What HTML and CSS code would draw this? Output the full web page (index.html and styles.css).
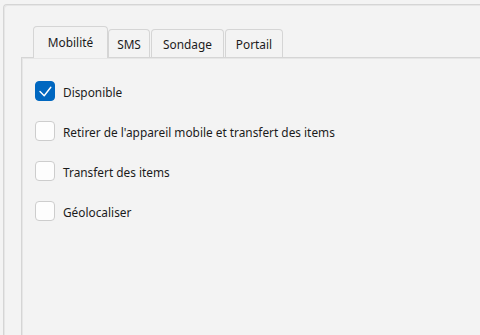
FILE: index.html
```
<!DOCTYPE html>
<html lang="fr">
<head>
<meta charset="utf-8">
<link rel="stylesheet" href="styles.css">
</head>
<body>
<div class="frame">
  <div class="tabsarea">
    <div class="tabs">
      <div class="tab tab-active t1">Mobilité</div>
      <div class="tab t2">SMS</div>
      <div class="tab t3">Sondage</div>
      <div class="tab t4">Portail</div>
    </div>
    <div class="panel">
      <label class="row"><span class="box box-checked"><svg viewBox="0 0 20 20" width="20" height="20"><path d="M5 10.6 L9.2 14.8 L15.8 6.2" fill="none" stroke="#fff" stroke-width="1.4" stroke-linecap="round" stroke-linejoin="round"/></svg></span><span class="txt">Disponible</span></label>
      <label class="row"><span class="box"></span><span class="txt">Retirer de l'appareil mobile et transfert des items</span></label>
      <label class="row"><span class="box"></span><span class="txt">Transfert des items</span></label>
      <label class="row"><span class="box"></span><span class="txt">Géolocaliser</span></label>
    </div>
  </div>
</div>
</body>
</html>
```
FILE: styles.css
```
html, body { margin: 0; padding: 0; }
body {
  width: 480px; height: 335px; overflow: hidden;
  background: #f3f3f3;
  font-family: "Noto Sans", "Open Sans", sans-serif;
  font-size: 11.85px;
  color: #1b1b1b;
}
.frame {
  box-sizing: border-box;
  margin: 4px 0 0 3px;
  height: 331px;
  border-top: 1px solid #d5d5d5;
  border-left: 1px solid #d5d5d5;
  border-top-left-radius: 4px;
  box-shadow: inset 1px 1px 0 #e6e6e6;
}
.tabsarea { padding: 21px 0 0 17px; }
.tabs {
  display: flex;
  align-items: flex-end;
  height: 31px;
  padding-left: 12px;
  position: relative;
  z-index: 1;
}
.tab {
  box-sizing: border-box;
  height: 28px;
  border: 1px solid #d5d5d5;
  border-bottom: none;
  border-radius: 4px 4px 0 0;
  background: #f3f3f3;
  display: flex;
  align-items: center;
  justify-content: center;
  padding-top: 1px;
}
.tab-active {
  height: 32px;
  margin-bottom: -1px;
  padding-top: 0;
  padding-bottom: 2px;
}
.t1 { width: 75px; }
.t2 { width: 42px; }
.t3 { width: 73px; margin-left: 1px; }
.t4 { width: 58px; margin-left: 1px; }
.panel {
  box-sizing: border-box;
  height: 278px;
  border-top: 1px solid #d5d5d5;
  border-left: 1px solid #d5d5d5;
  box-shadow: inset 1px 1px 0 #e6e6e6;
  padding: 23px 0 0 13px;
  display: flex;
  flex-direction: column;
  gap: 20px;
}
.row { display: flex; align-items: center; gap: 8px; height: 20px; }
.box {
  box-sizing: border-box;
  width: 20px; height: 20px;
  border: 1px solid #cdcdcd;
  border-radius: 4px;
  background: #fdfdfd;
  flex: none;
}
.box svg { display: block; margin: -1px; }
.box-checked { background: #0067c0; border-color: #0067c0; }
.txt { line-height: 16px; padding-top: 1px; }
```
